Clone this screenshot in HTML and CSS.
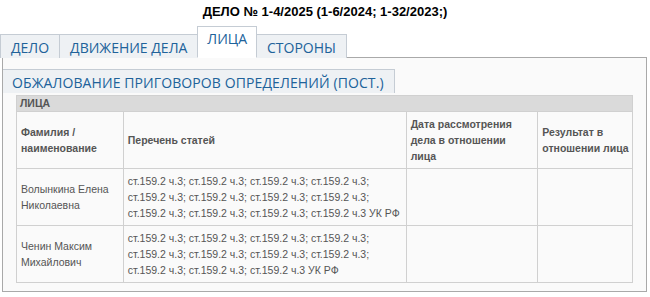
FILE: index.html
```html
<!DOCTYPE html>
<html lang="ru">
<head>
<meta charset="utf-8">
<link rel="stylesheet" href="styles.css">
</head>
<body>
<h1 class="title">ДЕЛО № 1-4/2025 (1-6/2024; 1-32/2023;)</h1>
<div class="tabs">
  <div class="tab">ДЕЛО</div>
  <div class="tab">ДВИЖЕНИЕ ДЕЛА</div>
  <div class="tab active">ЛИЦА</div>
  <div class="tab">СТОРОНЫ</div>
</div>
<div class="panel">
  <div class="subtabs">
    <div class="subtab">ОБЖАЛОВАНИЕ ПРИГОВОРОВ ОПРЕДЕЛЕНИЙ (ПОСТ.)</div>
  </div>
  <div class="content">
    <table class="persons">
      <thead>
        <tr><th class="caption" colspan="4">ЛИЦА</th></tr>
        <tr class="head">
          <th class="c1">Фамилия / наименование</th>
          <th class="c2">Перечень статей</th>
          <th class="c3">Дата рассмотрения дела в отношении лица</th>
          <th class="c4">Результат в отношении лица</th>
        </tr>
      </thead>
      <tbody>
        <tr>
          <td>Волынкина Елена Николаевна</td>
          <td>ст.159.2 ч.3; ст.159.2 ч.3; ст.159.2 ч.3; ст.159.2 ч.3; ст.159.2 ч.3; ст.159.2 ч.3; ст.159.2 ч.3; ст.159.2 ч.3; ст.159.2 ч.3; ст.159.2 ч.3; ст.159.2 ч.3; ст.159.2 ч.3 УК РФ</td>
          <td></td>
          <td></td>
        </tr>
        <tr>
          <td>Ченин Максим Михайлович</td>
          <td>ст.159.2 ч.3; ст.159.2 ч.3; ст.159.2 ч.3; ст.159.2 ч.3; ст.159.2 ч.3; ст.159.2 ч.3; ст.159.2 ч.3; ст.159.2 ч.3; ст.159.2 ч.3; ст.159.2 ч.3; ст.159.2 ч.3 УК РФ</td>
          <td></td>
          <td></td>
        </tr>
      </tbody>
    </table>
  </div>
</div>
</body>
</html>
```
FILE: styles.css
```css
html, body {
  margin: 0;
  padding: 0;
  background: #ffffff;
}
body {
  width: 650px;
  height: 297px;
  overflow: hidden;
  font-family: "Liberation Sans", Arial, sans-serif;
}
.title {
  margin: 0;
  padding-top: 4px;
  height: 24px;
  font-size: 13px;
  line-height: 15px;
  font-weight: bold;
  text-align: center;
  color: #000;
}
.tabs {
  display: flex;
  align-items: flex-end;
  height: 30px;
  position: relative;
  z-index: 1;
  margin-bottom: -1px;
}
.tab {
  height: 23px;
  padding: 0 10px;
  border: 1px solid #c5ccd4;
  border-bottom: none;
  border-left: none;
  background: #eef1f4;
  font-family: "Open Sans", "DejaVu Sans", sans-serif;
  font-size: 14px;
  line-height: 25px;
  color: #20629a;
}
.tab:first-child {
  border-left: 1px solid #c5ccd4;
}
.tab.active {
  height: 30px;
  padding: 0 9px;
  background: #ffffff;
  border-left: 1px solid #c5ccd4;
  border-bottom: 1px solid #ffffff;
  line-height: 24px;
  margin-left: -1px;
}
.panel {
  margin: 0 3px 0 2px;
  height: 235px;
  box-sizing: border-box;
  border: 1px solid #a9a9a9;
  background: #fafafa;
  padding-top: 11px;
}
.subtabs {
  display: flex;
}
.subtab {
  height: 23px;
  padding: 0 10px 0 9px;
  border: 1px solid #c5ccd4;
  border-bottom: none;
  border-left: none;
  background: #eef1f4;
  font-family: "Open Sans", "DejaVu Sans", sans-serif;
  font-size: 14px;
  letter-spacing: 0.1px;
  line-height: 25px;
  color: #20629a;
}
.content {
  padding: 2px 12px 0 13px;
}
.persons {
  width: 617px;
  border-collapse: collapse;
  font-size: 10.5px;
  line-height: 16px;
  color: #555;
  background: #fafafa;
}
.persons th, .persons td {
  border: 1px solid #d0d0d0;
  padding: 4px 2px 4px 4px;
  text-align: left;
  vertical-align: middle;
}
.persons th.caption {
  background: #dadada;
  padding: 0 3px;
  height: 15px;
  line-height: 15px;
  color: #555;
}
.persons th {
  font-weight: bold;
}
.c1 { width: 100px; }
.c2 { width: 278px; }
.persons th.c3 { width: 112px; padding-right: 15px; }
.c4 { width: 88px; }
```
